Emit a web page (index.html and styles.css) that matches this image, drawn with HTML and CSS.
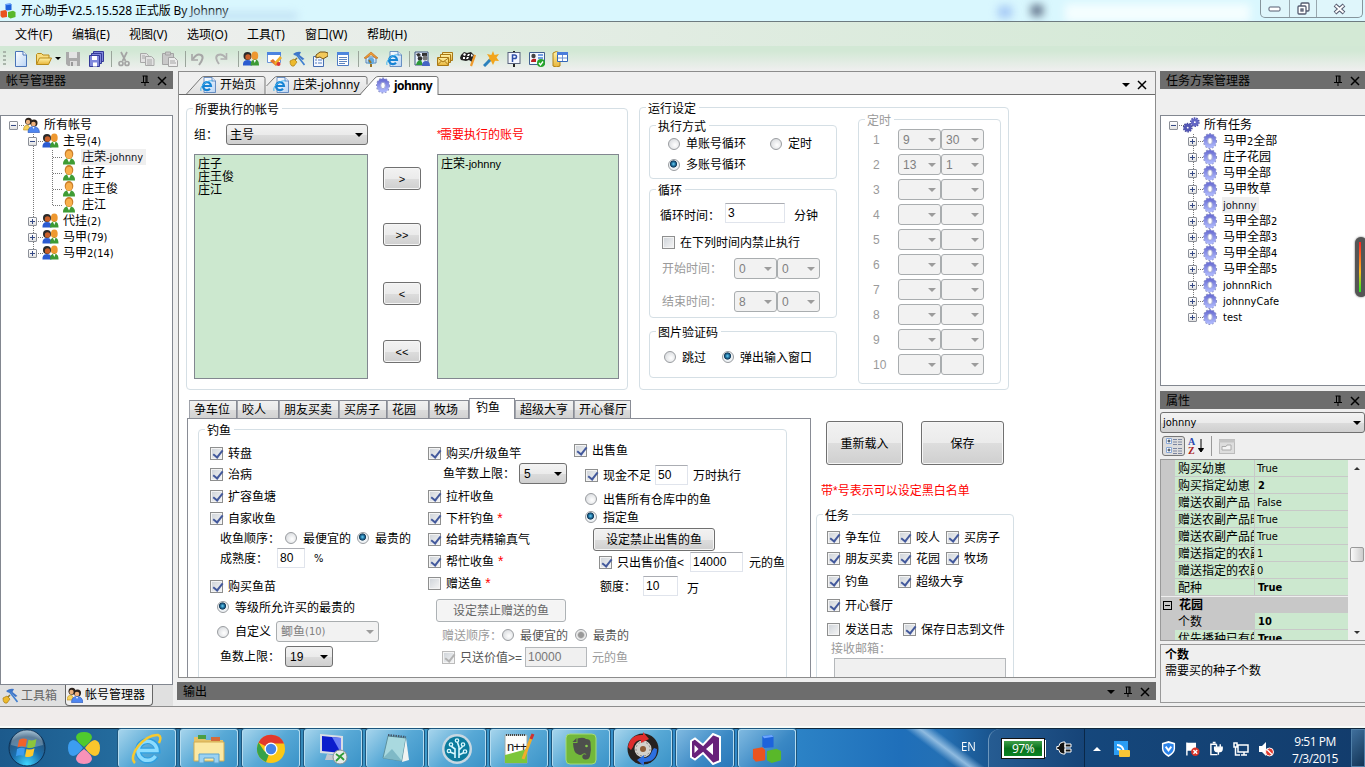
FILE: index.html
```html
<!DOCTYPE html>
<html lang="zh-CN">
<head>
<meta charset="utf-8">
<title>开心助手V2.5.15.528 正式版 By Johnny</title>
<link rel="stylesheet" href="styles.css">
</head>
<body>
<svg class="defs" width="0" height="0">
  <defs>
    <linearGradient id="gearFill" x1="0" y1="0" x2="0" y2="1"><stop offset="0" stop-color="#6e72d4"/><stop offset="1" stop-color="#aab4fa"/></linearGradient>
    <linearGradient id="page" x1="0" y1="0" x2="1" y2="1"><stop offset="0" stop-color="#fff"/><stop offset="1" stop-color="#b9d4f4"/></linearGradient>
    <linearGradient id="gold" x1="0" y1="0" x2="0" y2="1"><stop offset="0" stop-color="#fff3a8"/><stop offset="1" stop-color="#e8b53a"/></linearGradient>
    <linearGradient id="tab" x1="0" y1="0" x2="0" y2="1"><stop offset="0" stop-color="#f2f2f2"/><stop offset="1" stop-color="#e0e0e0"/></linearGradient>
    <symbol id="gear" viewBox="0 0 16 16"><ellipse cx="8" cy="8" rx="6.300" ry="7.200" fill="none" stroke="#8d92c4" stroke-width="1.500" stroke-dasharray="1.800 1.600"/><ellipse cx="8" cy="8" rx="4.300" ry="5.200" fill="#fff" stroke="url(#gearFill)" stroke-width="3.800"/><ellipse cx="8" cy="8" rx="2.200" ry="3.200" fill="none" stroke="#8086b8" stroke-width=".6"/></symbol>
    <symbol id="gears" viewBox="0 0 18 16"><g fill="#fff"><circle cx="12.500" cy="5" r="4.200" fill="none" stroke="#4c50ac" stroke-dasharray="1.600 1" stroke-width="2"/><circle cx="12.500" cy="5" r="2.500" stroke="#6266c4" stroke-width="3"/><circle cx="5" cy="10.800" r="4.200" fill="none" stroke="#44489c" stroke-dasharray="1.600 1" stroke-width="2"/><circle cx="5" cy="10.800" r="2.500" stroke="#5256b4" stroke-width="3"/></g></symbol>
    <symbol id="people" viewBox="0 0 16 16"><circle cx="4.500" cy="5" r="4" fill="#2a2a2a"/><circle cx="5" cy="6" r="2.700" fill="#c9602a"/><path d="M0 14.500q-.5-5.500 4.500-5.500T9 14.500z" fill="#2b5bd0"/><ellipse cx="11.800" cy="4.800" rx="3.400" ry="4.300" fill="#ee9830"/><path d="M7.500 14.500q0-6 4.300-6t4.200 6z" fill="#3c9a34"/><path d="M10.500 9h2.500l-1.200 3z" fill="#fff"/></symbol>
    <symbol id="users" viewBox="0 0 16 16"><circle cx="5" cy="4.300" r="3.500" fill="#2a211c"/><circle cx="4.500" cy="5" r="2.200" fill="#eab07a"/><path d="M0 13q0-5 4.500-5l3 5z" fill="#f7d35b" stroke="#b98a1a" stroke-width=".6"/><circle cx="10.500" cy="6" r="3.500" fill="#2a211c"/><circle cx="10" cy="7" r="2.300" fill="#f0b27c"/><path d="M4.500 15.500q0-6 5.500-6t6 6z" fill="#4f86f0" stroke="#2153b8" stroke-width=".6"/><path d="M9 10h2l-1 2z" fill="#fff"/></symbol>
    <symbol id="user" viewBox="0 0 14 16"><path d="M1 15.500q0-6.500 6-6.500t6 6.500z" fill="#3f9c35"/><path d="M5 9.500h4l-2 4z" fill="#fff"/><ellipse cx="7" cy="5" rx="4.300" ry="5" fill="#c97d2a"/><ellipse cx="7" cy="5.700" rx="3.200" ry="3.900" fill="#f9b04c"/></symbol>
    <symbol id="ie" viewBox="0 0 16 16"><path d="M4 .5h8l3.500 3.500v11.500H4z" fill="url(#page)" stroke="#4c7ab8" stroke-width=".8"/><path d="M12 .5v3.500h3.500" fill="#dbe9fb" stroke="#4c7ab8" stroke-width=".8"/><path d="M3.500 9h7.500a4 4 0 1 0-1 2.800" fill="none" stroke="#1683d4" stroke-width="2.200"/><path d="M1 14C-1 9 8 2.500 12.500 4" fill="none" stroke="#44b4ee" stroke-width="1"/></symbol>
    <symbol id="tools" viewBox="0 0 16 16"><path d="M4 3q4-3 8-2l-1.500 3L15.500 8l-2.300 1L9 4.500 6 4.500z" fill="#3d74c8"/><path d="M7 3l8.500 11" stroke="#3f7fd0" stroke-width="1.600"/><path d="M8 7L4 11" stroke="#8b7a30" stroke-width="1.500"/><path d="M1 10l4-2 3 3-3 4q-4 1-4-5z" fill="#edba2c" stroke="#a87b12" stroke-width=".7"/></symbol>
    <symbol id="disk" viewBox="0 0 16 16"><path d="M1 1h14v14H3l-2-2z" fill="#aaa"/><path d="M4 1h8v6H4z" fill="#e4e4e4"/><path d="M5 10h7v5H5z" fill="#ddd"/><path d="M6 11h2v4H6z" fill="#999"/></symbol>
    <symbol id="pin" viewBox="0 0 8 11"><path d="M1.500 1h5M2.500 1v6M5 1v6M6 1v6M0 7.500h8M4 8v3" fill="none" stroke="#000" stroke-width="1"/></symbol>
    <symbol id="x" viewBox="0 0 10 10"><path d="M1 1l8 8M9 1L1 9" stroke="#000" stroke-width="1.500"/></symbol>
    <symbol id="cubes" viewBox="0 0 16 16"><path d="M5.500 1l5-.5 1 1v5.500l-5 .5-1-1z" fill="#1d63dc"/><path d="M.5 8l5-1 1.500 1.500V14l-5 .8L.5 13z" fill="#ea5420"/><path d="M8 9l5-1.200L15.500 9v5l-5 1.500L8 14z" fill="#59b82a"/><path d="M5.500 1l5-.5 1 1-5 .7z" fill="#6ba6ff"/></symbol>
  </defs>
</svg>

<header class="titlebar">
  <svg width="16" height="16"><use href="#cubes"/></svg>
  <span class="title">开心助手V2.5.15.528 正式版 By Johnny</span>
  <div class="glass"><i class="g1"></i><i class="g2"></i><i class="g3"></i><i class="g4"></i></div>
  <div class="winbtns">
    <span><svg width="14" height="6"><rect x="1" y="1" width="11" height="4" rx="1" fill="#fff" stroke="#555c70"/></svg></span>
    <span><svg width="13" height="13" fill="#fff" stroke="#555c70" stroke-width="1.300"><rect x="4" y="1" width="8" height="8" rx="1"/><rect x="1" y="4" width="8" height="8" rx="1"/><rect x="4" y="7" width="2" height="2"/></svg></span>
    <span class="wclose"><svg width="13" height="12"><path d="M2 2l9 8M11 2l-9 8" stroke="#555c70" stroke-width="4"/><path d="M2.500 2.500l8 7M10.500 2.500l-8 7" stroke="#fff" stroke-width="1.800"/></svg></span>
  </div>
</header>

<nav class="menu"><span>文件(F)</span><span>编辑(E)</span><span>视图(V)</span><span>选项(O)</span><span>工具(T)</span><span>窗口(W)</span><span>帮助(H)</span></nav>

<div class="toolbar">
  <i class="grip"></i>
  <b><svg viewBox="0 0 16 16"><path d="M2.500.5h7.500l3.500 3.500v11.500h-11z" fill="url(#page)" stroke="#4a74b8"/><path d="M10 .5v3.500h3.500" fill="#fff" stroke="#4a74b8"/></svg></b>
  <b><svg viewBox="0 0 16 16"><path d="M.5 13V3.500l1-1h4l1.500 1.500h6v3" fill="#f8dd80" stroke="#b88a18"/><path d="M.5 13.500L3.500 7h12l-3 6.500z" fill="url(#gold)" stroke="#b88a18"/></svg></b>
  <i class="drop"></i>
  <b><svg><use href="#disk"/></svg></b>
  <b><svg viewBox="0 0 16 16"><g fill="#8088dc" stroke="#343a98"><path d="M5.500.5h10v10h-10z"/><path d="M3.500 2.500h10v10h-10z"/><path d="M1.500 4.500h10v11h-10z"/></g><path d="M4 5h5v4H4zM5 11.500h4v4H5z" fill="#fff"/></svg></b>
  <i class="sep"></i>
  <b><svg viewBox="0 0 16 16" fill="none" stroke="#a4a4a4" stroke-width="1.700"><path d="M5 1l4.500 9M11 1L6.500 10"/><circle cx="5" cy="12.500" r="2"/><circle cx="11" cy="12.500" r="2"/></svg></b>
  <b><svg viewBox="0 0 16 16" fill="#e2e2e2" stroke="#a8a8a8"><path d="M1.500 2.500h6l2 2v7h-8z"/><path d="M6.500 5.500h6l2.500 2.500v6.500H6.500z"/><path d="M8 9h5M8 11h5M8 13h5M3 5h3M3 7h3"/></svg></b>
  <b><svg viewBox="0 0 16 16" fill="#c9c9c9" stroke="#a4a4a4"><path d="M.5 2.500h11v11H.5z"/><path d="M3.500 1h5v3h-5z"/><path d="M6.500 6.500h6l3 3v6h-9z" fill="#ececec"/><path d="M8 10h5M8 12h6"/></svg></b>
  <i class="sep"></i>
  <b><svg viewBox="0 0 16 16" fill="none" stroke="#a6a6a6" stroke-width="2"><path d="M3 8q4-6 8-4t-2 10"/><path d="M2 3v6h6" stroke-width="1.600"/></svg></b>
  <b><svg viewBox="0 0 16 16" fill="none" stroke="#b0b0b0" stroke-width="2"><path d="M13 7Q9 2 5 4t1 9"/><path d="M13.500 2v6h-6" stroke-width="1.600"/></svg></b>
  <i class="sep wide"></i>
  <b><svg><use href="#people"/></svg></b>
  <b><svg viewBox="0 0 16 16"><path d="M1.500 1.500h13v10h-13z" fill="#fff" stroke="#6b94d8"/><path d="M1 1h14v3H1z" fill="#4c84e0"/><path d="M4 10l3-2 5 5-2 2z" fill="#e2762a"/><path d="M8 12l6-7 2 2-6 7z" fill="#efb029"/><circle cx="12.500" cy="13" r="2" fill="#d33"/></svg></b>
  <b><svg><use href="#tools"/></svg></b>
  <b><svg viewBox="0 0 16 16"><path d="M1.500 5.500h10v10h-10z" fill="#f5f8ff" stroke="#456db0"/><path d="M3 9h2M3 12h2M6 9h4M6 12h4" stroke="#5580c0"/><path d="M4 4l4-3h5l3 1v3l-5 3-3-2-4 1z" fill="#f2c95a" stroke="#75551a"/></svg></b>
  <b><svg viewBox="0 0 16 16"><path d="M2.500 1.500h11v13h-11z" fill="#fff" stroke="#4f7cc4"/><path d="M2 1h12v3H2z" fill="#4d86dd"/><path d="M4 6.500h8M4 8.500h8M4 10.500h8M4 12.500h6" stroke="#5d85bf"/></svg></b>
  <i class="sep"></i>
  <b><svg viewBox="0 0 16 16"><path d="M3 6h10v6H3z" fill="#ddeafa" stroke="#5584b8"/><path d="M1 7l7-6 7 6-2 .5-5-4-5 4z" fill="#ef9a32" stroke="#bb6614" stroke-width=".6"/><circle cx="8" cy="10" r="3.300" fill="#62a9df"/><path d="M6 9l2 3M8 13v3" stroke="#987326" stroke-width="2"/></svg></b>
  <b><svg><use href="#ie"/></svg></b>
  <i class="sep"></i>
  <b><svg viewBox="0 0 16 16"><path d="M1 1h13v13H1z" fill="#eaf2ff" stroke="#3e567e"/><path d="M2 3l3-1 2 2-3 2zM8 2h5v3H8z" fill="#333"/><circle cx="6" cy="7.500" r="2.300" fill="#333"/><circle cx="11" cy="7" r="2.500" fill="#777"/><path d="M2 14q1-5 5-5l2 5z" fill="#2e9a38"/><path d="M8 15q0-5 4-5t4 5z" fill="#4564c4"/></svg></b>
  <b><svg viewBox="0 0 16 16" fill="url(#gold)" stroke="#a97814"><path d="M5.500 1.500h10v8h-10z"/><path d="M3.500 3.500h10v8h-10z"/><path d="M.5 6.500h11v8H.5z"/><path d="M.5 7l5.500 4 5.500-4M.5 14l4-4M11.500 14l-4-4" fill="none"/></svg></b>
  <b><svg viewBox="0 0 16 16"><path d="M1 4l3-3 3 1 4-1 3 3-2 7-3-2-3 1-5-1-1-2z" fill="#222"/><path d="M4 2l2 1-1 2-2-1zM8 3l2 0-1 2-2 0zM3 6l2 0 0 2-2 0zM7 6l2 0-1 2-2 0zM11 3l2 1-1 2-1-1z" fill="#fff"/><path d="M15 4l-4 11" stroke="#ee9a2c" stroke-width="2.200"/></svg></b>
  <b><svg viewBox="0 0 16 16"><path d="M10 0l1.500 4L16 3l-2.500 3.500L16 10l-4-.3L10 14 8 10 4 10.500 6.500 7 4 3l4.300 1z" fill="#f2a51c"/><path d="M1 15l6-6" stroke="#2c81bd" stroke-width="3"/></svg></b>
  <b><svg viewBox="0 0 16 16"><path d="M8 0v16" stroke="#222" stroke-width="2"/><rect x="2" y="1.500" width="12" height="11" fill="#f4f7ff" stroke="#59637d"/><path d="M6.500 11V4h2.200a1.800 1.800 0 0 1 0 3.600H6.500" fill="none" stroke="#3050a8" stroke-width="1.500"/></svg></b>
  <b><svg viewBox="0 0 16 16"><path d="M.5 1.500h15v12H.5z" fill="#f3f8ff" stroke="#416090"/><circle cx="4.500" cy="5" r="2.200" fill="#444"/><path d="M2 11q0-4 5-3v3z" fill="#b22"/><path d="M9 4h5M9 7h5" stroke="#4a83d8" stroke-width="1.500"/><circle cx="12" cy="12" r="4" fill="#27a52b"/><path d="M10 12l1.500 2L14 10.500" fill="none" stroke="#fff" stroke-width="1.300"/></svg></b>
  <b><svg viewBox="0 0 16 16"><path d="M1 2q3-3 7 0v13q-4 2-7 0z" fill="url(#gold)" stroke="#b08218"/><path d="M5.500 1.500h10v9h-10z" fill="#fff" stroke="#3467b8"/><path d="M5 1h11v3H5z" fill="#4a7ddc"/><path d="M10.500 4v6M6 7h9" stroke="#6d92d2"/></svg></b>
</div>

<main class="work">
  <aside class="left">
    <div class="phead"><span>帐号管理器</span><svg width="8" height="11"><use href="#pin"/></svg><svg width="10" height="10"><use href="#x"/></svg></div>
    <div class="pgap"></div>
    <div class="tree tall">
      <svg class="wires" width="80" height="160" fill="none" stroke="#777" stroke-dasharray="1 1"><path d="M18 9.500h6M32.500 18v119M37 25.500h6M37 105.500h6M37 121.500h6M37 137.500h6M51.500 34v55M52 41.500h10M52 57.500h10M52 73.500h10M52 89.500h10"/></svg>
      <div class="tr"><i class="ex"></i><svg width="17" height="16"><use href="#users"/></svg><span>所有帐号</span></div>
      <div class="tr l2"><i class="ex"></i><svg width="17" height="16"><use href="#people"/></svg><span>主号<em>(4)</em></span></div>
      <div class="tr l3"><svg width="14" height="16"><use href="#user"/></svg><span class="on">庄荣<em>-johnny</em></span></div>
      <div class="tr l3"><svg width="14" height="16"><use href="#user"/></svg><span>庄子</span></div>
      <div class="tr l3"><svg width="14" height="16"><use href="#user"/></svg><span>庄王俊</span></div>
      <div class="tr l3"><svg width="14" height="16"><use href="#user"/></svg><span>庄江</span></div>
      <div class="tr l2"><i class="ex plus"></i><svg width="17" height="16"><use href="#people"/></svg><span>代挂<em>(2)</em></span></div>
      <div class="tr l2"><i class="ex plus"></i><svg width="17" height="16"><use href="#people"/></svg><span>马甲<em>(79)</em></span></div>
      <div class="tr l2"><i class="ex plus"></i><svg width="17" height="16"><use href="#people"/></svg><span>马甲<em>2(14)</em></span></div>
    </div>
    <div class="btabs"><span><svg width="16" height="16"><use href="#tools"/></svg>工具箱</span><span class="act"><svg width="16" height="16"><use href="#users"/></svg>帐号管理器</span></div>
  </aside>

  <section class="center">
    <div class="doc">
      <div class="dtabs">
        <div class="dt d1"><svg class="shape" width="82" height="20"><path d="M.5 19L15 3q1.500-1.500 3-1.500h59q2 0 2 2V19" fill="url(#tab)" stroke="#777"/></svg><svg width="16" height="16"><use href="#ie"/></svg><span>开始页</span></div>
        <div class="dt d2"><svg class="shape" width="104" height="20"><path d="M.5 19V12L8 3q1.500-1.500 3-1.500h88q2 0 2 2V19z" fill="url(#tab)"/><path d="M.5 11L8 3q1.500-1.500 3-1.500h88q2 0 2 2v6" fill="none" stroke="#777"/></svg><svg width="16" height="16"><use href="#ie"/></svg><span>庄荣-johnny</span></div>
        <div class="dt d3"><svg class="shape" width="79" height="20"><path d="M.5 20L15 3q1.500-1.500 3-1.500h58q2 0 2 2V20z" fill="#fff"/><path d="M.5 19L15 3q1.500-1.500 3-1.500h58q2 0 2 2V20" fill="none" stroke="#777"/></svg><svg width="16" height="17"><use href="#gear"/></svg><span>johnny</span></div>
        <i class="drop"></i><svg width="10" height="10"><use href="#x"/></svg>
      </div>

      <div class="form">
        <div class="upper">
          <fieldset class="accounts"><legend>所要执行的帐号</legend>
            <div class="body">
              <div class="src"><div class="row"><label>组：</label><div class="sel on">主号</div></div>
                <div class="list"><div>庄子</div><div>庄王俊</div><div>庄江</div></div></div>
              <div class="movers"><button>&gt;</button><button>&gt;&gt;</button><button>&lt;</button><button>&lt;&lt;</button></div>
              <div class="dst"><div class="row red"><span class="star">*</span>需要执行的账号</div><div class="list"><div>庄荣<em class="ms">-johnny</em></div></div></div>
            </div>
          </fieldset>

          <fieldset class="run"><legend>运行设定</legend>
            <div class="body">
              <div class="runcol">
                <fieldset class="mode"><legend>执行方式</legend>
                  <div class="row"><i class="rd"></i><label>单账号循环</label><i class="rd s24"></i><label>定时</label></div>
                  <div class="row"><i class="rd ck"></i><label>多账号循环</label></div>
                </fieldset>
                <fieldset class="loop"><legend>循环</legend>
                  <div class="row t7"><label class="w65 low">循环时间：</label><div class="inp w60">3</div><label class="s9 low">分钟</label></div>
                  <div class="row t9 s2"><i class="cb"></i><label>在下列时间内禁止执行</label></div>
                  <div class="row t6 dis h21 s2"><label class="w72">开始时间：</label><div class="sel w43">0</div><div class="sel w43">0</div></div>
                  <div class="row t12 dis h21 s2"><label class="w72">结束时间：</label><div class="sel w43">8</div><div class="sel w43">0</div></div>
                </fieldset>
                <fieldset class="captcha"><legend>图片验证码</legend>
                  <div class="row t9"><i class="rd"></i><label>跳过</label><i class="rd ck s16"></i><label>弹出输入窗口</label></div>
                </fieldset>
              </div>
              <fieldset class="timer dis"><legend>定时</legend>
                <div class="row"><label>1</label><div class="sel w43">9</div><div class="sel w43">30</div></div>
                <div class="row"><label>2</label><div class="sel w43">13</div><div class="sel w43">1</div></div>
                <div class="row"><label>3</label><div class="sel w43"></div><div class="sel w43"></div></div>
                <div class="row"><label>4</label><div class="sel w43"></div><div class="sel w43"></div></div>
                <div class="row"><label>5</label><div class="sel w43"></div><div class="sel w43"></div></div>
                <div class="row"><label>6</label><div class="sel w43"></div><div class="sel w43"></div></div>
                <div class="row"><label>7</label><div class="sel w43"></div><div class="sel w43"></div></div>
                <div class="row"><label>8</label><div class="sel w43"></div><div class="sel w43"></div></div>
                <div class="row"><label>9</label><div class="sel w43"></div><div class="sel w43"></div></div>
                <div class="row"><label>10</label><div class="sel w43"></div><div class="sel w43"></div></div>
              </fieldset>
            </div>
          </fieldset>
        </div>

        <div class="lower">
          <div class="tabbox">
            <div class="ftabs"><span>争车位</span><span>咬人</span><span>朋友买卖</span><span>买房子</span><span>花园</span><span>牧场</span><span class="act">钓鱼</span><span>超级大亨</span><span>开心餐厅</span></div>
            <div class="fpanel">
              <fieldset class="fish"><legend>钓鱼</legend>
                <div class="body">
                  <div class="colA">
                    <div class="row t7"><i class="cb ck"></i><label>转盘</label></div>
                    <div class="row t1"><i class="cb ck"></i><label>治病</label></div>
                    <div class="row t2"><i class="cb ck"></i><label>扩容鱼塘</label></div>
                    <div class="row t2"><i class="cb ck"></i><label>自家收鱼</label></div>
                    <div class="row s10"><label class="w65">收鱼顺序：</label><i class="rd"></i><label>最便宜的</label><i class="rd ck s6"></i><label>最贵的</label></div>
                    <div class="row s10"><label class="w57">成熟度：</label><div class="inp w28">80</div><label class="s9 pct">%</label></div>
                    <div class="row t8"><i class="cb ck"></i><label>购买鱼苗</label></div>
                    <div class="row t1 s7"><i class="rd ck"></i><label>等级所允许买的最贵的</label></div>
                    <div class="row t4 s7 h21"><i class="rd"></i><label class="w41">自定义</label><div class="sel w103 dis">鲫鱼<em>(10)</em></div></div>
                    <div class="row t4 s10 h21"><label class="w65">鱼数上限：</label><div class="sel on w48">19</div></div>
                  </div>
                  <div class="colBC">
                    <div class="pair">
                      <div class="colB">
                        <div class="row t7"><i class="cb ck"></i><label>购买/升级鱼竿</label></div>
                        <div class="row h21 s15"><label class="w76">鱼竿数上限：</label><div class="sel on w48">5</div></div>
                        <div class="row t2"><i class="cb ck"></i><label>拉杆收鱼</label></div>
                        <div class="row t2"><i class="cb ck"></i><label>下杆钓鱼 <u>*</u></label></div>
                        <div class="row t1"><i class="cb ck"></i><label>给蚌壳精输真气</label></div>
                        <div class="row t2"><i class="cb ck"></i><label>帮忙收鱼<u> *</u></label></div>
                        <div class="row t2"><i class="cb"></i><label>赠送鱼 <u>*</u></label></div>
                      </div>
                      <div class="colC">
                        <div class="row t4"><i class="cb ck"></i><label>出售鱼</label></div>
                        <div class="row t5 s11"><i class="cb ck"></i><label class="w52">现金不足</label><div class="inp w33">50</div><label class="s5">万时执行</label></div>
                        <div class="row t5 s11 h18"><i class="rd"></i><label>出售所有仓库中的鱼</label></div>
                        <div class="row s11 h18"><i class="rd ck"></i><label>指定鱼</label></div>
                        <button class="t2">设定禁止出售的鱼</button>
                        <div class="row t1 s25"><i class="cb ck"></i><label class="w73">只出售价值&lt;</label><div class="inp w53">14000</div><label class="s6">元的鱼</label></div>
                        <div class="row t4 s26"><label class="w43">额度：</label><div class="inp w35">10</div><label class="s9 low">万</label></div>
                      </div>
                    </div>
                    <button class="gift" disabled>设定禁止赠送的鱼</button>
                    <div class="row t3 s14 dis"><label class="w60">赠送顺序：</label><i class="rd"></i><label class="dk">最便宜的</label><i class="rd s7 half"></i><label class="dk">最贵的</label></div>
                    <div class="row t2 s14 dis"><i class="cb ck"></i><label class="w65 dk">只送价值&gt;=</label><div class="inp w62">10000</div><label class="s5">元的鱼</label></div>
                  </div>
                </div>
              </fieldset>
            </div>
          </div>
          <div class="side">
            <div class="big"><button>重新载入</button><button>保存</button></div>
            <div class="note red">带*号表示可以设定黑白名单</div>
            <fieldset class="tasks"><legend>任务</legend>
              <div class="row t6"><i class="cb ck"></i><label class="w53">争车位</label><i class="cb ck"></i><label class="w30">咬人</label><i class="cb ck"></i><label>买房子</label></div>
              <div class="row t1"><i class="cb ck"></i><label class="w53">朋友买卖</label><i class="cb ck"></i><label class="w30">花园</label><i class="cb ck"></i><label>牧场</label></div>
              <div class="row t3"><i class="cb ck"></i><label class="w53">钓鱼</label><i class="cb ck"></i><label>超级大亨</label></div>
              <div class="row t4"><i class="cb ck"></i><label>开心餐厅</label></div>
              <div class="row t4"><i class="cb"></i><label class="w58">发送日志</label><i class="cb ck"></i><label>保存日志到文件</label></div>
              <div class="row h18 dis s4"><label>接收邮箱：</label></div>
              <div class="row t1 dis s7"><div class="inp mail"></div></div>
            </fieldset>
          </div>
        </div>
      </div>
    </div>
    <div class="phead out"><span>输出</span><i class="drop"></i><svg width="8" height="11"><use href="#pin"/></svg><svg width="10" height="10"><use href="#x"/></svg></div>
  </section>

  <aside class="right">
    <div class="phead"><span>任务方案管理器</span><svg width="8" height="11"><use href="#pin"/></svg><svg width="10" height="10"><use href="#x"/></svg></div>
    <div class="pgap"></div>
    <div class="tree tasktree">
      <svg class="wires" width="80" height="220" fill="none" stroke="#777" stroke-dasharray="1 1"><path d="M18 9.500h6M32.500 18v183M37 25.500h6M37 41.500h6M37 57.500h6M37 73.500h6M37 89.500h6M37 105.500h6M37 121.500h6M37 137.500h6M37 153.500h6M37 169.500h6M37 185.500h6M37 201.500h6"/></svg>
      <div class="tr"><i class="ex"></i><svg width="17" height="16"><use href="#gears"/></svg><span>所有任务</span></div>
      <div class="tr l2"><i class="ex plus"></i><svg width="16" height="16"><use href="#gear"/></svg><span>马甲<em>2</em>全部</span></div>
      <div class="tr l2"><i class="ex plus"></i><svg width="16" height="16"><use href="#gear"/></svg><span>庄子花园</span></div>
      <div class="tr l2"><i class="ex plus"></i><svg width="16" height="16"><use href="#gear"/></svg><span>马甲全部</span></div>
      <div class="tr l2"><i class="ex plus"></i><svg width="16" height="16"><use href="#gear"/></svg><span>马甲牧草</span></div>
      <div class="tr l2"><i class="ex plus"></i><svg width="16" height="16"><use href="#gear"/></svg><span class="on"><em>johnny</em></span></div>
      <div class="tr l2"><i class="ex plus"></i><svg width="16" height="16"><use href="#gear"/></svg><span>马甲全部<em>2</em></span></div>
      <div class="tr l2"><i class="ex plus"></i><svg width="16" height="16"><use href="#gear"/></svg><span>马甲全部<em>3</em></span></div>
      <div class="tr l2"><i class="ex plus"></i><svg width="16" height="16"><use href="#gear"/></svg><span>马甲全部<em>4</em></span></div>
      <div class="tr l2"><i class="ex plus"></i><svg width="16" height="16"><use href="#gear"/></svg><span>马甲全部<em>5</em></span></div>
      <div class="tr l2"><i class="ex plus"></i><svg width="16" height="16"><use href="#gear"/></svg><span><em>johnnRich</em></span></div>
      <div class="tr l2"><i class="ex plus"></i><svg width="16" height="16"><use href="#gear"/></svg><span><em>johnnyCafe</em></span></div>
      <div class="tr l2"><i class="ex plus"></i><svg width="16" height="16"><use href="#gear"/></svg><span><em>test</em></span></div>
      <div class="meter"><i></i></div>
    </div>
    <div class="phead second"><span>属性</span><svg width="8" height="11"><use href="#pin"/></svg><svg width="10" height="10"><use href="#x"/></svg></div>
    <div class="sel on objsel"><em>johnny</em></div>
    <div class="ptools">
      <b><svg width="18" height="18" viewBox="0 0 18 18"><path d="M1.500 1.500h5v5h-5zM1.500 10.500h5v5h-5z" fill="#fff" stroke="#88a8d8"/><path d="M2.500 4h3M4 2.500v3M2.500 13h3M4 11.500v3" stroke="#234"/><path d="M8 2.500h4M13 2.500h4M8 5h4M13 5h4M8 7.500h4M13 7.500h4M8 11.500h4M13 11.500h4M8 14h4M13 14h4M8 16.500h4M13 16.500h4" stroke="#7c86a0"/></svg></b>
      <div class="az"><span>A</span><span>Z</span></div>
      <svg width="6" height="16"><path d="M3 1v12M.5 10.500L3 14l2.500-3.500z" stroke="#000" fill="#000"/></svg>
      <i class="bar"></i>
      <svg width="16" height="15"><rect x=".5" y=".5" width="15" height="14" fill="#ddd" stroke="#bbb"/><path d="M0 2h16" stroke="#c4c4c4" stroke-width="3"/><path d="M3 7.500h4l1-1.500h4v5H3z" fill="#f4f4f4" stroke="#aaa"/></svg>
    </div>
    <div class="pgrid">
      <div class="cells">
        <div><span>购买幼崽</span><span>True</span></div>
        <div><span>购买指定幼崽</span><span class="bd">2</span></div>
        <div><span>赠送农副产品</span><span>False</span></div>
        <div><span>赠送农副产品时</span><span>True</span></div>
        <div><span>赠送农副产品的</span><span>True</span></div>
        <div><span>赠送指定的农副</span><span>1</span></div>
        <div><span>赠送指定的农副</span><span>0</span></div>
        <div><span>配种</span><span class="bd">True</span></div>
        <div class="cat"><i></i><span>花园</span></div>
        <div class="cur"><span>个数</span><span class="bd">10</span></div>
        <div><span>优先播种已有的</span><span class="bd">True</span></div>
      </div>
      <div class="sbar"><i class="up"></i><i class="thumb"></i><i class="down"></i></div>
    </div>
    <div class="pdesc"><b>个数</b><span>需要买的种子个数</span></div>
  </aside>
</main>

<div class="status"></div>

<footer class="taskbar">
  <svg class="orb" width="38" height="38" viewBox="0 0 38 38"><defs><radialGradient id="orbg" cx=".5" cy=".95" r=".95"><stop offset="0" stop-color="#3fd6ff"/><stop offset=".45" stop-color="#1b6fae"/><stop offset=".8" stop-color="#2a5478"/><stop offset="1" stop-color="#8fb4cc"/></radialGradient></defs><circle cx="19" cy="19" r="18" fill="url(#orbg)" stroke="#0c2f52"/><path d="M3 16a16 15 0 0 1 32 0q-16 5-32 0z" fill="#fff" opacity=".25"/><path d="M11 11q4-2.500 8-.8l-1.500 7.800q-4-1.700-8 .5z" fill="#f0622a"/><path d="M20.500 10.800q4 1.500 8-.8L27 17.500q-4 2.500-8 1z" fill="#8cc63c"/><path d="M9 20q4-2.300 8-.6l-1.500 7.400q-4-1.500-7.500.5z" fill="#3c9cf0"/><path d="M18.500 20q4 1.500 8-.8L25 26.500q-4 2.500-8 1z" fill="#fdc82e"/></svg>
  <svg class="clover" width="34" height="34" viewBox="0 0 34 34"><path d="M17 16Q9 10 9 6q1-5 8-5t8 5q0 4-8 10z" fill="#4fca2e"/><path d="M16 17Q10 9 6 9q-5 1-5 8t5 8q4 0 10-8z" fill="#3c9df0"/><path d="M18 17q6-8 10-8 5 1 5 8t-5 8q-4 0-10-8z" fill="#fbc62c"/><path d="M17 18q-8 6-8 10 1 5 8 5t8-5q0-4-8-10z" fill="#f892b8"/></svg>
  <div class="apps">
    <b><svg width="34" height="34" viewBox="0 0 34 34"><path d="M9 18.500h18.500A9.800 9.800 0 1 0 26 24" fill="none" stroke="#2f9fe0" stroke-width="6"/><path d="M9 18.500h18A9.500 9.500 0 1 0 25.500 24" fill="none" stroke="#8bdcff" stroke-width="3.500"/><path d="M5 31C-3 24 14 2 28 3c3 1 3 4 1 8" fill="none" stroke="#f7c92f" stroke-width="2.500"/></svg></b>
    <b><svg width="34" height="32" viewBox="0 0 34 32"><path d="M2 4h10l2 3h17v21H2z" fill="#e5c268"/><path d="M6 2h8v4H6z" fill="#4a9e43"/><path d="M19 4h9v4h-9z" fill="#d36a3a"/><path d="M2 9h30v19H2z" fill="#fbe9a4" stroke="#d3ad50"/><path d="M7 30V21h20v9h-5v-5H12v5z" fill="#9bd2f2" stroke="#5da3cf"/></svg></b>
    <b><svg width="30" height="30" viewBox="0 0 30 30"><circle cx="15" cy="15" r="14" fill="#fbc816"/><path d="M15 15L2.500 8.500A14 14 0 0 1 28 9.500H15z" fill="#e2382c"/><path d="M15 15l-5 13A14 14 0 0 1 2.500 8.500l6 9z" fill="#35a24a"/><circle cx="15" cy="15" r="6.500" fill="#fff"/><circle cx="15" cy="15" r="5.200" fill="#4484e8"/></svg></b>
    <b><svg width="32" height="32" viewBox="0 0 32 32"><path d="M3 1l23 2v19L3 20z" fill="#d9dde4"/><path d="M5 3l19 2v15L5 18z" fill="#0c1ccc"/><path d="M15 4l9 1v15z" fill="#6b80f4"/><path d="M10 21l7 1v5H8z" fill="#c2c6ce"/><circle cx="23" cy="24" r="7" fill="#e7ecea" stroke="#8b9290"/><path d="M19 21l4 3-4 4M27 20l-4 3 4 4" fill="none" stroke="#2e9b36" stroke-width="1.800"/></svg></b>
    <b><svg width="32" height="32" viewBox="0 0 32 32"><path d="M9 3l18 2-4 23-19-3z" fill="#a9d9df" stroke="#5d919e"/><path d="M27 5l3 22-7 2z" fill="#f1f4f2"/><path d="M4 25l9-9 10 12z" fill="#7fb9c6"/><path d="M9 2l18 2" stroke="#456" stroke-width="2" stroke-dasharray="1.500 1"/></svg></b>
    <b><svg width="32" height="32" viewBox="0 0 32 32"><circle cx="16" cy="16" r="15" fill="#c8d8e2"/><circle cx="16" cy="16" r="12.500" fill="#0c7c9e"/><path d="M14 25V16l-4-3M18 25V14l-2-6M14 21l-5-2M18 22l6-3M18 17l4-4" stroke="#d8f8ff" stroke-width="1.600" fill="none"/><g fill="#0c7c9e" stroke="#d8f8ff" stroke-width="1.300"><circle cx="10" cy="11.500" r="1.700"/><circle cx="16" cy="7.500" r="1.700"/><circle cx="22" cy="11.500" r="1.700"/><circle cx="8" cy="18" r="1.700"/><circle cx="24" cy="18.500" r="1.700"/></g></svg></b>
    <b><svg width="32" height="32" viewBox="0 0 32 32"><path d="M2 2h22v28H2z" fill="#fdfdfa" stroke="#9aa"/><path d="M2 22l22-6v14H2z" fill="#7cc63a"/><path d="M3 2h20" stroke="#444" stroke-width="2" stroke-dasharray="1 1"/><text x="4" y="18" class="npp">n++</text><path d="M29 3L20 26" stroke="#f1ad2b" stroke-width="3"/><path d="M30 1l-2 5" stroke="#c33" stroke-width="3"/></svg></b>
    <b><svg width="32" height="32" viewBox="0 0 32 32"><rect x="1" y="1" width="30" height="30" rx="4" fill="#72b83a" stroke="#a5dc78"/><path d="M8 10h4.500V5.500q6-1.500 8.500.5 4 0 4.500 3 1 8-.5 14-1 4-5 3.500-3.500-1-2.500-4 1.500-2 4-.5-1-3-4-1-2 2-5 0-4-1-4.500-11z" fill="#4d4f4c"/><path d="M7.500 9L11.500 5v4z" fill="#4d4f4c"/><circle cx="21.500" cy="13" r="1.300" fill="#8bd050"/></svg></b>
    <b><svg width="34" height="34" viewBox="0 0 34 34"><circle cx="17" cy="17" r="12" fill="#d4d1cc" stroke="#26211f" stroke-width="7"/><circle cx="17" cy="17" r="7" fill="none" stroke="#8e8a86" stroke-dasharray="2 2"/><circle cx="17" cy="17" r="3" fill="#8d5b36"/><path d="M2 15Q4 2 17 3V0l6 7-8 4V8q-6 0-8 7l-2 3z" fill="#dd2c2c"/><path d="M31 17q0 13-13 13v4l-7-6 7-5v3q6 0 8-7l2-3z" fill="#2c6fe0"/></svg></b>
    <b><svg width="32" height="32" viewBox="0 0 32 32"><path d="M2 8l4-2.500 8 6.500L24 1l7 3v24l-7 3-10-11-8 6.500L2 24z" fill="#68217a" stroke="#fff" stroke-width="2"/><path d="M5.500 12v8l4-4zM17 16l7 6V10z" fill="#fff"/></svg></b>
    <b><svg width="30" height="30"><use href="#cubes"/></svg></b>
  </div>
  <span class="lang">EN</span>
  <div class="power"><div class="batt">97%</div><svg width="16" height="14" viewBox="0 0 16 14"><path d="M9 1H7Q3 1.500 2.700 5.500H.8v3h1.900Q3 12.500 7 13h2zM9 3h6v3H9zM9 8h6v3H9z" fill="#111" stroke="#fff"/></svg></div>
  <div class="tray">
    <i class="uparr"></i>
    <svg width="16" height="16" viewBox="0 0 16 16"><rect width="14" height="14" fill="#2a9df4"/><path d="M3 4q6 0 7 7M3 8q3 0 4 3" stroke="#fff" fill="none" stroke-width="2"/><rect x="5" y="9" width="11" height="7" rx="1" fill="#f9c535"/></svg>
    <svg class="far" width="15" height="16" viewBox="0 0 16 17"><path d="M8 0l7 2v6q0 5-7 9Q1 13 1 8V2z" fill="#fff"/><path d="M8 2l5.500 1.500V8q0 4-5.500 7-5.500-3-5.500-7V3.500z" fill="#2b83ea"/><path d="M5 6l3 4 3-4" fill="none" stroke="#fff" stroke-width="2"/></svg>
    <svg width="15" height="16" viewBox="0 0 16 16"><path d="M2 1v14M3 2h8v7H3z" fill="#fff" stroke="#fff" stroke-width="1.500"/><circle cx="11" cy="11" r="4.500" fill="#d93428"/><path d="M9 9l4 4M13 9l-4 4" stroke="#fff" stroke-width="1.500"/></svg>
    <svg width="15" height="16" viewBox="0 0 16 16" fill="none" stroke="#fff" stroke-width="1.500"><path d="M8 3H2v11h7M4 1h3"/><path d="M6 6h8v2q0 3-4 3T6 8zM8 3v3M12 3v3M10 11v3" fill="#fff"/></svg>
    <svg width="16" height="16" viewBox="0 0 16 16" fill="none" stroke="#fff" stroke-width="1.500"><path d="M5 4h10v7H5zM8 14h6M11 11v3M1 2h3v4H1zM2.500 6v8H7"/></svg>
    <svg width="16" height="16" viewBox="0 0 16 16"><path d="M1 5h3l4-4v14l-4-4H1z" fill="#fff"/><circle cx="11.500" cy="11" r="4" fill="#e33a2e" stroke="#fff"/><path d="M9 8.500l5 5" stroke="#fff" stroke-width="1.300"/></svg>
  </div>
  <div class="clock"><span>9:51 PM</span><span>7/3/2015</span></div>
  <i class="desk"></i>
</footer>
</body>
</html>
```
FILE: styles.css
```css
* { box-sizing: border-box; }
body { margin: 0; width: 1365px; height: 767px; overflow: hidden; display: flex; flex-direction: column; background: #efefef; color: #000;
  font: 12px/14px "Liberation Sans", "Noto Sans CJK SC", sans-serif; white-space: nowrap; }
.defs { position: absolute; }
svg { display: block; flex: none; }
i, em, u { font-style: normal; text-decoration: none; }
i { display: block; flex: none; }
em { font: 11px "DejaVu Sans Condensed", "DejaVu Sans", sans-serif; }
.ms { font: 11px "Liberation Sans", sans-serif; }
.red, u { color: #f00; }
u { font-size: 14px; line-height: 10px; }
.star { width: 3px; font-size: 10px; }
.drop { width: 0; height: 0; border: 4px solid transparent; border-top-color: #000; border-bottom: 0; }

/* title bar */
.titlebar { height: 22px; flex: none; display: flex; align-items: center; background: #d9f7fe; border-bottom: 1px solid #6d7b80; position: relative; overflow: hidden; }
.title { margin-left: 5px; font: 12px/20px "Noto Sans", "Noto Sans CJK SC", sans-serif; letter-spacing: -.13px; position: relative; }
.glass i { position: absolute; filter: blur(4px); }
.glass .g1 { left: 998px; top: 6px; width: 14px; height: 12px; background: #a6c9f5; }
.glass .g2 { left: 1031px; top: 5px; width: 12px; height: 11px; background: #5c6c84; }
.glass .g3 { left: 1065px; top: 4px; width: 185px; height: 18px; background: #f5feff; }
.glass .g4 { left: 185px; top: 13px; width: 112px; height: 6px; background: #bcdcf2; }
.winbtns { position: absolute; left: 1260px; top: 0; width: 103px; height: 18px; border: 1px solid #86959c; border-top: 0; border-radius: 0 0 5px 5px; display: grid; grid-template-columns: 28px 27px 1fr; background: #dff6fb; }
.winbtns span { display: flex; align-items: center; justify-content: center; border-left: 1px solid #98a7ae; }
.winbtns span:first-child { border-left: 0; }

.menu { height: 24px; padding: 1px 0 0 15px; display: grid; grid-template-columns: 57px 57px 58px 60px 58px 62px 60px; align-items: center; background: linear-gradient(90deg, #efefef 5%, #d3e9d5 92%); font-family: "Noto Sans", "Noto Sans CJK SC", sans-serif; }
.toolbar { height: 25px; display: flex; align-items: center; background: linear-gradient(#d2e8d5 20%, #eeefee 95%); }
.toolbar b { width: 23px; display: flex; justify-content: center; }
.toolbar b svg { width: 16px; height: 16px; }
.toolbar .drop { border-width: 3px; border-bottom: 0; }
.toolbar .sep { width: 5px; height: 16px; border-right: 1px solid #9aa59b; }
.toolbar .wide { width: 7px; }
.grip { width: 3px; height: 16px; margin: 0 3px 0 3px; background: repeating-linear-gradient(#a9b5aa 0 2px, transparent 2px 4px); }

/* docking layout */
.work { height: 635px; display: flex; }
.left { width: 173px; display: flex; flex-direction: column; }
.center { width: 978px; margin-left: 5px; }
.right { width: 205px; margin-left: 4px; }
.phead { height: 18px; display: flex; align-items: center; background: #6d6d6d; padding: 1px 6px 0; }
.phead svg + svg { margin-left: 8px; }
.phead span { margin-right: auto; }
.right .phead { padding-right: 5px; }
.pgap { height: 26px; }
.tree { background: #fff; border: 1px solid #828790; position: relative; padding-top: 1px; }
.tall { height: 570px; }
.tasktree { height: 271px; border-right: 0; }
.wires { position: absolute; left: 0; top: 0; }
.tr { height: 16px; display: flex; align-items: center; padding-left: 8px; position: relative; }
.tr svg { margin-left: 5px; }
.tr span { margin-left: 3px; padding: 0 1px; line-height: 17px; height: 16px; }
.l2 { padding-left: 27px; }
.l3 { padding-left: 56px; }
.l3 span { margin-left: 5px; }
.l2 svg[width="16"] + span { margin-left: 4px; }
.on:not(.sel) { background: #efefef; color: #112; padding-right: 3px; }
.ex { width: 9px; height: 9px; border: 1px solid #8c9098; background: linear-gradient(#354a86, #354a86) center/5px 1px no-repeat, linear-gradient(#fff, #e2e2e2); border-radius: 1px; }
.plus { background: linear-gradient(#354a86, #354a86) center/5px 1px no-repeat, linear-gradient(#354a86, #354a86) center/1px 5px no-repeat, linear-gradient(#fff, #e2e2e2); }
.btabs { height: 21px; display: flex; background: #e0e0e0; color: #666; }
.btabs span { display: flex; align-items: center; width: 65px; padding-left: 2px; gap: 3px; }
.btabs .act { width: 88px; background: #f0f0f0; color: #000; border: 1px solid #666; border-top: 0; border-radius: 0 0 4px 4px; padding-left: 1px; gap: 2px; }

/* document area */
.doc { height: 607px; border: 1px solid #8c8c8c; display: flex; flex-direction: column; overflow: hidden; }
.dtabs { height: 23px; flex: none; display: flex; align-items: center; border-bottom: 1px solid #686868; padding: 3px 8px 0 7px; }
.dt { height: 20px; display: flex; align-items: center; position: relative; gap: 4px; margin-bottom: -1px; }
.dt .shape { position: absolute; left: 0; top: 0; }
.dt svg:not(.shape), .dt span { position: relative; }
.d1 { width: 80px; padding-left: 14px; }
.d2 { width: 94px; padding-left: 7px; font-family: "Noto Sans", "Noto Sans CJK SC", sans-serif; }
.d3 { width: 80px; padding-left: 15px; gap: 3px; font: bold 12px "Noto Sans", sans-serif; letter-spacing: -.55px; }
.dtabs > .drop { margin-left: auto; margin-right: 7px; }
.form { flex: 1; background: #fff; overflow: hidden; padding-left: 7px; }
.out { margin: 4px 0 0 -1px; }
.out .drop { margin-right: 9px; }

fieldset { margin: 0; padding: 0; min-width: 0; border: 1px solid #d5dfe5; border-radius: 4px; }
legend { height: 13px; line-height: 16px; margin-left: 6px; padding: 0 3px 0 2px; }
.row { height: 20px; display: flex; align-items: center; }
.row label { padding-top: 1px; }
.body, .upper, .lower, .pair { display: flex; }
.upper { height: 303px; }
.accounts { width: 442px; height: 288px; margin-top: 7px; }
.src { width: 174px; margin-left: 7px; }
.src .row, .dst .row { height: 21px; margin: 9px 0; }
.src label { width: 32px; }
.src .sel { width: 142px; padding-left: 3px; }
.list { height: 225px; border: 1px solid #828790; background: #cce8cf; padding: 2px 3px; line-height: 14px; }
.list div { height: 13px; }
.movers { width: 38px; margin-left: 15px; padding-top: 52px; }
.movers button { width: 38px; height: 23px; margin-bottom: 33px; font: 11px "Liberation Sans"; }
.movers button:nth-child(2) { margin-bottom: 36px; }
.movers button:nth-child(3) { margin-bottom: 35px; }
.dst { width: 182px; margin-left: 16px; }
.run { width: 370px; height: 289px; margin: 6px 0 0 11px; }
.runcol { width: 188px; margin-left: 9px; }
.mode { height: 60px; margin-top: 5px; }
.mode .row { height: 21px; margin-left: 18px; }
.mode legend + .row { margin-top: 1px; }
.loop { height: 135px; margin-top: 4px; padding-left: 10px; }
.loop legend { margin-left: -4px; }
.captcha { height: 53px; margin-top: 7px; padding-left: 14px; }
.captcha legend { margin-left: -8px; }
.timer { width: 143px; height: 271px; margin: -1px 0 0 21px; padding-left: 14px; }
.timer .row { height: 21px; margin-bottom: 4px; }
.timer legend { margin-left: -8px; }
.timer legend + .row { margin-top: 3px; }
.timer label { width: 25px; }

/* controls */
.sel { height: 21px; border: 1px solid #a9adaf; border-radius: 3px; background: #f2f2f2; display: flex; align-items: center; padding-left: 4px; color: #777; }
.sel::after { content: ""; margin-left: auto; margin-right: 4px; border: 4px solid transparent; border-top-color: #9c9c9c; border-bottom: 0; }
.sel.on { border-color: #707070; background: linear-gradient(#f3f3f3, #ebebeb 50%, #dcdcdc 51%, #cfcfcf); color: #000; }
.sel.on::after { border-top-color: #000; }
.inp { height: 20px; flex: none; border: 1px solid #e0e4ec; border-top-color: #abadb3; background: #fff; padding-left: 2px; line-height: 18px; }
.dis, .dis .sel { color: #9a9a9a; }
.sel.dis, .dis .sel { color: #808080; }
.dis .inp { background: #f0f0f0; border-color: #b5b8bb; color: #777; }
.dis .dk { color: #555; }
.cb { width: 13px; height: 13px; border: 1px solid #8e8f8f; background: linear-gradient(135deg, #cdd2d8, #f6f6f6); box-shadow: inset 0 0 0 1px #f4f4f4; position: relative; margin-right: 5px; }
.cb.ck::after { content: ""; position: absolute; left: 4px; top: 0; width: 4px; height: 8px; border: solid #43599c; border-width: 0 2px 2px 0; transform: rotate(38deg); }
.dis .cb { border-color: #bbb; }
.dis .cb.ck::after { border-color: #b2b2b2; }
.rd { width: 12px; height: 12px; margin-right: 6px; border: 1px solid #999ca0; border-radius: 50%; background: radial-gradient(circle at 60% 60%, #fff, #d0d3d7); }
.rd.ck { background: radial-gradient(circle at 45% 40%, #6bd2f5 0, #1e6d9c 2px, #123a58 3.200px, #eef2f5 4px); }
.rd.half { background: radial-gradient(circle, #999 0 2.500px, #eee 4px); }
button { display: block; padding: 1px 0 0; border: 1px solid #707070; border-radius: 3px; box-shadow: inset 0 0 0 1px #f6f6f6; background: linear-gradient(#f2f2f2, #ebebeb 50%, #dddddd 51%, #cfcfcf); font: inherit; color: #000; white-space: nowrap; }
button:disabled { border-color: #adb2b5; background: #f4f4f4; color: #666; }

/* tabbed settings */
.tabbox { width: 624px; margin-left: 1px; }
.ftabs { height: 20px; display: grid; grid-template-columns: 48px 42px 60px 48px 42px 40px 46px 59px 57px; align-items: end; padding-left: 2px; }
.ftabs span { height: 18px; line-height: 19px; padding-left: 4px; border: 1px solid #898c95; border-bottom: 0; border-left-color: #a0a3ab; background: linear-gradient(#f1f1f1, #e9e9e9 50%, #dcdcdc 51%, #d2d2d2); }
.ftabs .act { height: 21px; margin-bottom: -1px; position: relative; background: #fff; padding-left: 6px; }
.fpanel { height: 270px; border: 1px solid #898c95; padding: 4px 0 0 10px; }
.fish { width: 589px; height: 290px; }
.colA { width: 229px; padding-left: 11px; }
.colB { width: 146px; }
.colC button { width: 122px; height: 23px; margin-left: 19px; }
.gift { width: 130px; height: 23px; margin: 6px 0 0 8px; }
.pair { height: 157px; }
.side { width: 198px; margin-left: 5px; padding-top: 23px; }
.big { display: flex; gap: 18px; padding-left: 10px; }
.big button { width: 77px; height: 44px; }
.big button + button { width: 83px; }
.note { margin: 16px 0 7px 5px; height: 20px; line-height: 21px; }
.tasks { height: 200px; padding-left: 10px; width: 198px; }
.tasks legend { margin-left: -4px; }
.mail { width: 172px; }
.row .pct { font: 11px "DejaVu Sans Condensed"; padding-top: 0; }
.row .low { padding-top: 5px; }

.t1 { margin-top: 1px; } .t2 { margin-top: 2px; } .t3 { margin-top: 3px; } .t4 { margin-top: 4px; } .t5 { margin-top: 5px; }
.t6 { margin-top: 6px; } .t7 { margin-top: 7px; } .t8 { margin-top: 8px; } .t9 { margin-top: 9px; } .t12 { margin-top: 12px; }
.s2 { margin-left: 2px; } .s4 { margin-left: 4px; } .s5 { margin-left: 5px; } .s6 { margin-left: 6px; } .s7 { margin-left: 7px; }
.s9 { margin-left: 9px; } .s10 { margin-left: 10px; } .s11 { margin-left: 11px; } .s14 { margin-left: 14px; } .s15 { margin-left: 15px; }
.s16 { margin-left: 16px; } .s24 { margin-left: 24px; } .s25 { margin-left: 25px; } .s26 { margin-left: 26px; }
.h18 { height: 18px; } .h21 { height: 21px; }
.w28 { width: 28px; } .w30 { width: 30px; } .w33 { width: 33px; } .w35 { width: 35px; } .w41 { width: 41px; } .w43 { width: 43px; }
.w48 { width: 48px; } .w52 { width: 52px; } .w53 { width: 53px; } .w57 { width: 57px; } .w58 { width: 58px; } .w60 { width: 60px; }
.w62 { width: 62px; } .w65 { width: 65px; } .w72 { width: 72px; } .w73 { width: 73px; } .w76 { width: 76px; } .w103 { width: 103px; }

/* property window */
.meter { position: absolute; left: 194px; top: 121px; width: 12px; height: 60px; border-radius: 6px; background: #555; padding: 5px 4px; box-shadow: 0 0 2px #555; }
.meter i { width: 2px; height: 50px; background: linear-gradient(#f22, #fb2 60%, #2e2); }
.second { margin-top: 5px; }
.objsel { margin-top: 3px; height: 21px; padding-left: 2px; }
.objsel::after { margin-right: 3px; }
.ptools { height: 26px; display: flex; align-items: center; padding-left: 2px; }
.ptools b { width: 23px; height: 20px; border: 1px solid #777; border-radius: 3px; background: #ddd; display: flex; align-items: center; justify-content: center; }
.az { display: flex; flex-direction: column; margin: 0 3px 0 3px; font: bold 10px/9px "Liberation Serif", serif; color: #a22; }
.az span:first-child { color: #2848b0; }
.bar { width: 1px; height: 20px; background: #999; margin: 0 7px; }
.pgrid { height: 182px; border: 1px solid #999; border-right: 0; display: grid; grid-template-columns: 187px 17px; overflow: hidden; background: #c8c8c8; }
.cells { height: 180px; overflow: hidden; }
.cells > div { height: 17px; display: grid; grid-template-columns: 79px 93px; column-gap: 1px; padding-left: 14px; background: #c8c8c8; }
.cells span { height: 16px; line-height: 18px; padding-left: 3px; background: #cce8cf; overflow: hidden; }
.cells span + span { font: 11px/18px "DejaVu Sans Condensed"; padding-left: 2px; }
.cells span.bd { font-weight: bold; padding-left: 3px; }
.cells .cur span:first-child { background: #c8c8c8; }
.cells .cat { display: flex; align-items: center; padding-left: 2px; font-weight: bold; border-top: 1px solid #eee; }
.cells .cat span { background: none; padding-left: 6px; line-height: 17px; }
.cat i { width: 9px; height: 9px; border: 1px solid #000; background: linear-gradient(#000, #000) center/5px 1px no-repeat; }
.sbar { background: #f0f0f0; height: 180px; display: flex; flex-direction: column; align-items: center; }
.up { margin-top: 7px; border: 3px solid transparent; border-bottom-color: #333; border-top: 0; }
.down { margin-top: 69px; border: 3px solid transparent; border-top-color: #333; border-bottom: 0; }
.thumb { width: 14px; height: 15px; margin-top: 77px; border: 1px solid #999; border-radius: 2px; background: linear-gradient(90deg, #fafafa, #ccc); }
.pdesc { margin-top: 3px; height: 59px; border: 1px solid #999; border-right: 0; display: flex; flex-direction: column; padding: 2px 4px; line-height: 16px; }

.status { height: 22px; background: #f0eceb; border-top: 1px solid #8c8c8c; border-bottom: 2px solid #f8fbf8; }

/* taskbar */
.taskbar { height: 39px; position: relative; display: flex; align-items: center; border-top: 1px solid #10283c; color: #fff; font: 11px "Open Sans", sans-serif;
  background: linear-gradient(90deg, #1c5a8c 0, #236a9c 8%, #3f9bcb 30%, #2e86c8 57%, #1f6fba 66%, #2470b4 69%, #164a80 74%, #123c6c); }
.taskbar::before { content: ""; position: absolute; left: 895px; top: 0; width: 100px; height: 38px; background: linear-gradient(37deg, transparent 40%, #8fbbe0 50%, transparent 60%); }
.orb { margin-left: 8px; }
.clover { margin-left: 21px; }
.apps { display: flex; gap: 4px; margin-left: 17px; height: 38px; }
.apps b { width: 58px; border: 1px solid #b4dcf0; border-bottom: 0; border-radius: 3px; box-shadow: 0 0 0 1px #1d567e; background: linear-gradient(135deg, #a5d4ec, #58a9d6 50%, #3b93c8); display: flex; align-items: center; justify-content: center; }
.apps b:nth-last-child(-n+2) { background: linear-gradient(135deg, #7fb9e0, #3a88c4 60%, #2a78ba); }
.npp { font: 13px "Liberation Sans"; fill: #111; letter-spacing: -1px; }
.lang { position: absolute; left: 961px; top: 9px; font-size: 12px; transform: scaleX(.95); transform-origin: left; }
.power { position: absolute; left: 988px; top: 0; width: 97px; height: 38px; display: flex; align-items: center; gap: 12px; padding-left: 13px; border-left: 1px solid #6d97bd; border-right: 1px solid #0a2848; border-radius: 12px 0 0 0; background: linear-gradient(90deg, #265c92, #164478); }
.batt { width: 42px; height: 19px; border: 2px solid #fff; outline: 1px solid #111; background: linear-gradient(#3fa04a, #08701c 50%, #0a8424); text-align: center; line-height: 15px; font-size: 12px; box-shadow: 3px 0 0 -1px #fff; letter-spacing: -.5px; }
.tray { position: absolute; left: 1093px; top: 0; height: 38px; display: flex; align-items: center; gap: 9px; padding-top: 2px; }
.uparr { border: 4px solid transparent; border-bottom-color: #fff; border-top: 0; margin-right: 4px; }
.far { margin-left: 22px; }
.clock { position: absolute; left: 1280px; top: 4px; width: 70px; display: flex; flex-direction: column; text-align: center; line-height: 17px; font-size: 12px; letter-spacing: -.5px; }
.desk { position: absolute; left: 1351px; top: 0; width: 14px; height: 38px; border: 1px solid #4f7fa8; background: linear-gradient(135deg, #3f6f9c, #123456); }
```
